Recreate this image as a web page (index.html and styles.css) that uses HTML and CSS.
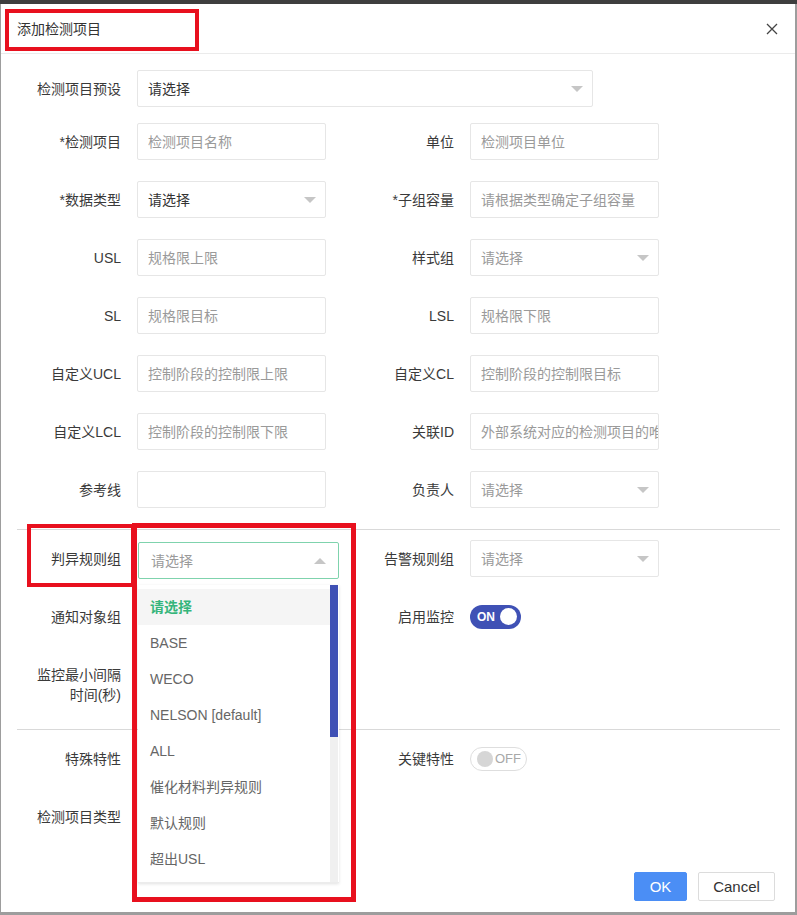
FILE: index.html
```html
<!DOCTYPE html>
<html lang="zh-CN">
<head>
<meta charset="utf-8">
<title>添加检测项目</title>
<link rel="stylesheet" href="styles.css">
</head>
<body>
<div class="dialog">
  <div class="dialog-header">
    <span class="dialog-title">添加检测项目</span>
    <button class="close" aria-label="关闭">
      <svg width="12" height="12" viewBox="0 0 12 12"><path d="M1 1 L11 11 M11 1 L1 11" stroke="#444" stroke-width="1.3" fill="none"/></svg>
    </button>
  </div>

  <div class="dialog-body">
    <div class="row row-first">
      <div class="field field-wide">
        <label class="label">检测项目预设</label>
        <div class="select select-wide"><span class="value">请选择</span><i class="caret"></i></div>
      </div>
    </div>

    <div class="row">
      <div class="field"><label class="label">*检测项目</label><input class="input" placeholder="检测项目名称"></div>
      <div class="field"><label class="label">单位</label><input class="input" placeholder="检测项目单位"></div>
    </div>

    <div class="row">
      <div class="field"><label class="label">*数据类型</label><div class="select"><span class="value">请选择</span><i class="caret"></i></div></div>
      <div class="field"><label class="label">*子组容量</label><input class="input" placeholder="请根据类型确定子组容量"></div>
    </div>

    <div class="row">
      <div class="field"><label class="label">USL</label><input class="input" placeholder="规格限上限"></div>
      <div class="field"><label class="label">样式组</label><div class="select"><span class="value placeholder">请选择</span><i class="caret"></i></div></div>
    </div>

    <div class="row">
      <div class="field"><label class="label">SL</label><input class="input" placeholder="规格限目标"></div>
      <div class="field"><label class="label">LSL</label><input class="input" placeholder="规格限下限"></div>
    </div>

    <div class="row">
      <div class="field"><label class="label">自定义UCL</label><input class="input" placeholder="控制阶段的控制限上限"></div>
      <div class="field"><label class="label">自定义CL</label><input class="input" placeholder="控制阶段的控制限目标"></div>
    </div>

    <div class="row">
      <div class="field"><label class="label">自定义LCL</label><input class="input" placeholder="控制阶段的控制限下限"></div>
      <div class="field"><label class="label">关联ID</label><input class="input" placeholder="外部系统对应的检测项目的唯一标识"></div>
    </div>

    <div class="row">
      <div class="field"><label class="label">参考线</label><input class="input"></div>
      <div class="field"><label class="label">负责人</label><div class="select"><span class="value placeholder">请选择</span><i class="caret"></i></div></div>
    </div>

    <div class="divider"></div>

    <div class="row">
      <div class="field"><label class="label">判异规则组</label><div class="select select-open"><span class="value placeholder">请选择</span><i class="caret caret-up"></i></div></div>
      <div class="field"><label class="label">告警规则组</label><div class="select"><span class="value placeholder">请选择</span><i class="caret"></i></div></div>
    </div>

    <div class="row">
      <div class="field"><label class="label">通知对象组</label><div class="control-space"></div></div>
      <div class="field"><label class="label">启用监控</label><span class="switch switch-on"><span class="switch-text">ON</span><span class="knob"></span></span></div>
    </div>

    <div class="row row-tall">
      <div class="field field-top"><label class="label label-multi">监控最小间隔<br>时间(秒)</label><div class="control-space"></div></div>
    </div>

    <div class="divider"></div>

    <div class="row">
      <div class="field"><label class="label">特殊特性</label><div class="control-space"></div></div>
      <div class="field"><label class="label">关键特性</label><span class="switch switch-off"><span class="knob"></span><span class="switch-text">OFF</span></span></div>
    </div>

    <div class="row">
      <div class="field"><label class="label">检测项目类型</label><div class="control-space"></div></div>
    </div>
  </div>

  <div class="dialog-footer">
    <button class="btn btn-primary">OK</button>
    <button class="btn btn-default">Cancel</button>
  </div>

  <!-- option list of the 判异规则组 select -->
  <div class="dropdown">
    <ul class="options">
      <li class="option active">请选择</li>
      <li class="option">BASE</li>
      <li class="option">WECO</li>
      <li class="option">NELSON [default]</li>
      <li class="option">ALL</li>
      <li class="option">催化材料判异规则</li>
      <li class="option">默认规则</li>
      <li class="option">超出USL</li>
    </ul>
    <div class="scrollbar"><div class="thumb"></div></div>
  </div>
</div>

<!-- highlight frames -->
<div class="mark mark-title"></div>
<div class="mark mark-label"></div>
<div class="mark mark-list"></div>
</body>
</html>
```

FILE: styles.css
```css
* {
  box-sizing: border-box;
}

html, body {
  margin: 0;
  padding: 0;
}

body {
  width: 797px;
  height: 915px;
  overflow: hidden;
  position: relative;
  background: linear-gradient(#3e3e3e 0 4px, #9d9d9d 4px);
  font-family: "Liberation Sans", "Noto Sans CJK SC", sans-serif;
  font-size: 14px;
  color: #333;
}

.dialog {
  position: relative;
  margin: 4px 2px 3px 1px;
  height: 908px;
  background: #fff;
  display: flex;
  flex-direction: column;
}

/* header */
.dialog-header {
  height: 50px;
  padding: 0 17px 0 16px;
  display: flex;
  align-items: center;
  justify-content: space-between;
  border-bottom: 1px solid #ebebeb;
}

.dialog-title {
  font-size: 14px;
  line-height: 20px;
  color: #333;
}

.close {
  border: 0;
  background: none;
  padding: 0;
  width: 12px;
  height: 12px;
  display: flex;
}

/* form body */
.dialog-body {
  padding: 16px 15px 0 16px;
}

.row {
  display: flex;
  gap: 24px;
  margin-bottom: 21px;
}

.row-first {
  margin-bottom: 16px;
}

.row-tall {
  height: 52px;
}

.field {
  width: 309px;
  display: flex;
  align-items: center;
}

.field-wide {
  width: auto;
}

.field-top {
  align-items: flex-start;
}

.label {
  width: 104px;
  margin-right: 16px;
  flex: none;
  text-align: right;
  line-height: 20px;
  color: #3a3a3a;
}

.label-multi {
  padding-top: 9px;
}

.input,
.select,
.control-space {
  width: 189px;
  height: 37px;
  flex: none;
}

.input {
  border: 1px solid #e6e6e6;
  border-radius: 2px;
  padding: 0 0 0 10px;
  font: inherit;
  font-size: 14px;
  color: #333;
  outline: none;
  background: #fff;
}

.input::placeholder {
  color: #9a9a9a;
}

.select {
  border: 1px solid #e6e6e6;
  border-radius: 2px;
  padding: 0 9px 0 10px;
  display: flex;
  align-items: center;
  justify-content: space-between;
  background: #fff;
}

.select-wide {
  width: 456px;
}

.select-open {
  width: 201px;
  margin: 2px 0 -2px 1px;
  border-color: #7fd3ad;
  padding-left: 12px;
  padding-right: 12px;
}

.value {
  line-height: 20px;
  color: #333;
}

.value.placeholder {
  color: #9a9a9a;
}

.caret {
  width: 0;
  height: 0;
  border-left: 6px solid transparent;
  border-right: 6px solid transparent;
  border-top: 6px solid #c6c6c6;
}

.caret-up {
  border-top: 0;
  border-bottom: 6px solid #c6c6c6;
}

.divider {
  width: 763px;
  height: 1px;
  background: #d9d9d9;
  margin-bottom: 10px;
}

/* switches */
.switch {
  display: inline-flex;
  align-items: center;
  height: 24px;
  border-radius: 12px;
  font-size: 12px;
}

.switch-on {
  width: 51px;
  background: #3f51b5;
  padding: 0 4px 0 7px;
  justify-content: space-between;
}

.switch-on .switch-text {
  color: #fff;
  font-weight: bold;
}

.switch-on .knob {
  width: 17px;
  height: 17px;
  border-radius: 50%;
  background: #fff;
}

.switch-off {
  width: 57px;
  background: #fff;
  border: 1px solid #dedede;
  padding: 0 5px 0 6px;
  justify-content: space-between;
}

.switch-off .knob {
  width: 16px;
  height: 16px;
  border-radius: 50%;
  background: #d6d6d6;
}

.switch-off .switch-text {
  color: #a8a8a8;
  font-size: 13px;
}

/* footer */
.dialog-footer {
  margin-top: auto;
  display: flex;
  justify-content: flex-end;
  gap: 11px;
  padding: 0 20px 11px 0;
}

.btn {
  height: 29px;
  border-radius: 2px;
  font-family: "Liberation Sans", sans-serif;
  font-size: 15px;
  padding: 0;
}

.btn-primary {
  width: 53px;
  background: #4b8ef5;
  border: 1px solid #4b8ef5;
  color: #fff;
}

.btn-default {
  width: 77px;
  background: #fff;
  border: 1px solid #dcdcdc;
  color: #333;
}

/* option list */
.dropdown {
  position: absolute;
  left: 137px;
  top: 581px;
  width: 201px;
  height: 298px;
  background: #fff;
  box-shadow: 0 1px 3px rgba(0, 0, 0, 0.12);
  border-bottom: 1px solid #ececec;
  display: flex;
}

.options {
  list-style: none;
  margin: 0;
  padding: 4px 0 0;
  flex: 1;
}

.option {
  height: 36px;
  line-height: 36px;
  padding-left: 12px;
  color: #666;
  font-size: 14px;
}

.option.active {
  background: #f5f5f5;
  color: #35b57b;
  font-weight: bold;
}

.scrollbar {
  width: 8px;
  margin-right: 1px;
  background: #f0f0f0;
}

.thumb {
  height: 152px;
  background: #3f51b5;
}

/* red highlight frames */
.mark {
  position: absolute;
  border: 4px solid #e8101e;
  pointer-events: none;
}

.mark-title {
  left: 5px;
  top: 9px;
  width: 194px;
  height: 42px;
}

.mark-label {
  left: 27px;
  top: 524px;
  width: 108px;
  height: 63px;
}

.mark-list {
  left: 132px;
  top: 523px;
  width: 224px;
  height: 379px;
  border-width: 5px;
}
```
